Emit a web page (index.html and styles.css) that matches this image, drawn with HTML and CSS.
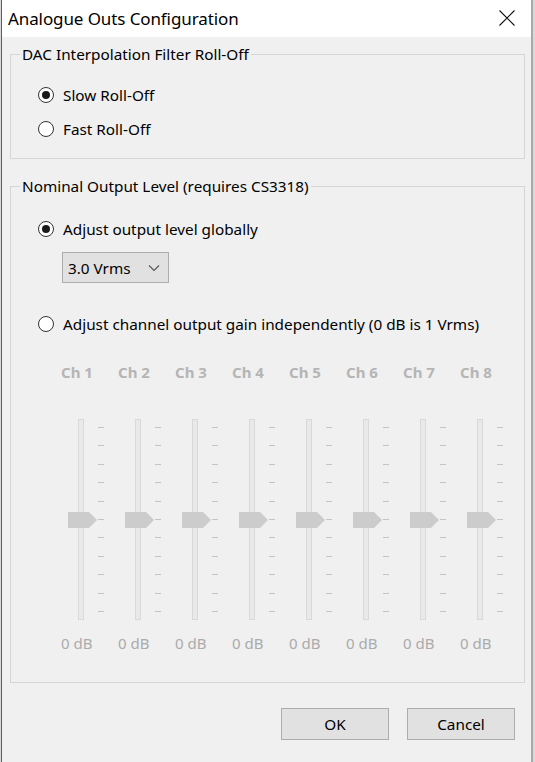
FILE: index.html
```html
<!DOCTYPE html>
<html>
<head>
<meta charset="utf-8">
<link rel="stylesheet" href="styles.css">
</head>
<body>
<div class="screen">
  <div class="window">
    <div class="titlebar">
      <span class="title">Analogue Outs Configuration</span>
      <svg class="close" width="16" height="16" viewBox="0 0 16 16"><path d="M0.5 0.5 L15.5 15.5 M15.5 0.5 L0.5 15.5" stroke="#111" stroke-width="1.1" fill="none"/></svg>
    </div>
    <div class="client">
      <fieldset class="group g1">
        <legend>DAC Interpolation Filter Roll-Off</legend>
        <div class="radio-row"><span class="radio checked"></span><span>Slow Roll-Off</span></div>
        <div class="radio-row second"><span class="radio"></span><span>Fast Roll-Off</span></div>
      </fieldset>
      <fieldset class="group g2">
        <legend>Nominal Output Level (requires CS3318)</legend>
        <div class="radio-row"><span class="radio checked"></span><span>Adjust output level globally</span></div>
        <div class="combo"><span>3.0 Vrms</span><svg width="12" height="8" viewBox="0 0 12 8"><path d="M1 1.5 L6 6.5 L11 1.5" stroke="#555" stroke-width="1.1" fill="none"/></svg></div>
        <div class="radio-row third"><span class="radio"></span><span>Adjust channel output gain independently (0 dB is 1 Vrms)</span></div>
        <div class="channels">
          <div class="ch"><div class="ch-label">Ch 1</div><div class="slider"><div class="track"></div><svg class="thumb" width="29" height="16" viewBox="0 0 29 16"><polygon points="0,0 21,0 29,8 21,16 0,16" fill="#cccccc"/></svg><div class="ticks"><i></i><i></i><i></i><i></i><i></i><i></i><i></i><i></i><i></i><i></i><i></i></div></div><div class="db">0 dB</div></div>
          <div class="ch"><div class="ch-label">Ch 2</div><div class="slider"><div class="track"></div><svg class="thumb" width="29" height="16" viewBox="0 0 29 16"><polygon points="0,0 21,0 29,8 21,16 0,16" fill="#cccccc"/></svg><div class="ticks"><i></i><i></i><i></i><i></i><i></i><i></i><i></i><i></i><i></i><i></i><i></i></div></div><div class="db">0 dB</div></div>
          <div class="ch"><div class="ch-label">Ch 3</div><div class="slider"><div class="track"></div><svg class="thumb" width="29" height="16" viewBox="0 0 29 16"><polygon points="0,0 21,0 29,8 21,16 0,16" fill="#cccccc"/></svg><div class="ticks"><i></i><i></i><i></i><i></i><i></i><i></i><i></i><i></i><i></i><i></i><i></i></div></div><div class="db">0 dB</div></div>
          <div class="ch"><div class="ch-label">Ch 4</div><div class="slider"><div class="track"></div><svg class="thumb" width="29" height="16" viewBox="0 0 29 16"><polygon points="0,0 21,0 29,8 21,16 0,16" fill="#cccccc"/></svg><div class="ticks"><i></i><i></i><i></i><i></i><i></i><i></i><i></i><i></i><i></i><i></i><i></i></div></div><div class="db">0 dB</div></div>
          <div class="ch"><div class="ch-label">Ch 5</div><div class="slider"><div class="track"></div><svg class="thumb" width="29" height="16" viewBox="0 0 29 16"><polygon points="0,0 21,0 29,8 21,16 0,16" fill="#cccccc"/></svg><div class="ticks"><i></i><i></i><i></i><i></i><i></i><i></i><i></i><i></i><i></i><i></i><i></i></div></div><div class="db">0 dB</div></div>
          <div class="ch"><div class="ch-label">Ch 6</div><div class="slider"><div class="track"></div><svg class="thumb" width="29" height="16" viewBox="0 0 29 16"><polygon points="0,0 21,0 29,8 21,16 0,16" fill="#cccccc"/></svg><div class="ticks"><i></i><i></i><i></i><i></i><i></i><i></i><i></i><i></i><i></i><i></i><i></i></div></div><div class="db">0 dB</div></div>
          <div class="ch"><div class="ch-label">Ch 7</div><div class="slider"><div class="track"></div><svg class="thumb" width="29" height="16" viewBox="0 0 29 16"><polygon points="0,0 21,0 29,8 21,16 0,16" fill="#cccccc"/></svg><div class="ticks"><i></i><i></i><i></i><i></i><i></i><i></i><i></i><i></i><i></i><i></i><i></i></div></div><div class="db">0 dB</div></div>
          <div class="ch"><div class="ch-label">Ch 8</div><div class="slider"><div class="track"></div><svg class="thumb" width="29" height="16" viewBox="0 0 29 16"><polygon points="0,0 21,0 29,8 21,16 0,16" fill="#cccccc"/></svg><div class="ticks"><i></i><i></i><i></i><i></i><i></i><i></i><i></i><i></i><i></i><i></i><i></i></div></div><div class="db">0 dB</div></div>
        </div>
      </fieldset>
      <div class="buttons">
        <div class="btn">OK</div>
        <div class="btn">Cancel</div>
      </div>
    </div>
  </div>
  <div class="edge"></div>
</div>
</body>
</html>
```
FILE: styles.css
```css
html, body {
  margin: 0;
  padding: 0;
}
body {
  background: #9c9c9c;
  font-family: "Noto Sans", "DejaVu Sans", sans-serif;
  font-size: 15.3px;
  color: #000;
}
.screen {
  display: flex;
  height: 762px;
  background: #d9d9d9;
}
.window {
  margin-left: 1px;
  width: 529px;
  border-left: 1px solid #5e5e5e;
  display: flex;
  flex-direction: column;
  background: #f0f0f0;
}
.edge {
  width: 2px;
  background: #a9a9a9;
}
.titlebar {
  height: 37px;
  background: #fff;
  display: flex;
  align-items: center;
  justify-content: space-between;
  padding: 0 16px 0 6px;
}
.title {
  font-size: 17px;
  letter-spacing: -0.1px;
}
.close {
  margin-top: -1px;
}
.client {
  flex: 1;
  display: flex;
  flex-direction: column;
}
.group {
  margin: 0 0 0 8px;
  width: 515px;
  box-sizing: border-box;
  border: 1px solid #d5d5d5;
  padding: 0 0 0 27px;
  min-width: 0;
}
.group legend {
  margin-left: -18px;
  padding: 0 2px;
  line-height: 16px;
}
.g1 {
  margin-top: 9px;
  padding-top: 21px;
  padding-bottom: 17px;
}
.g2 {
  margin-top: 19px;
  padding-top: 23px;
  padding-bottom: 31px;
}
.radio-row {
  display: flex;
  align-items: center;
  height: 24px;
}
.radio-row.second {
  margin-top: 10px;
}
.radio-row.third {
  margin-top: 29px;
}
.radio {
  width: 16px;
  height: 16px;
  box-sizing: border-box;
  border: 1px solid #333;
  border-radius: 50%;
  background: #fff;
  margin-right: 9px;
  display: flex;
  align-items: center;
  justify-content: center;
}
.radio.checked::after {
  content: "";
  width: 8px;
  height: 8px;
  border-radius: 50%;
  background: #1a1a1a;
}
.combo {
  margin: 11px 0 0 24px;
  width: 107px;
  height: 31px;
  box-sizing: border-box;
  border: 1px solid #adadad;
  background: #e1e1e1;
  display: flex;
  align-items: center;
  justify-content: space-between;
  padding: 0 8px 0 5px;
}
.channels {
  margin: 28px 0 0 23px;
  display: grid;
  grid-template-columns: repeat(8, 57px);
}
.ch {
  display: flex;
  flex-direction: column;
}
.ch-label {
  line-height: 16px;
  color: #b5b5b5;
  font-weight: 700;
  font-size: 15px;
}
.slider {
  position: relative;
  height: 201px;
  margin-top: 39px;
}
.track {
  position: absolute;
  left: 17px;
  top: 0;
  width: 6px;
  height: 201px;
  box-sizing: border-box;
  border: 1px solid #d9d9d9;
  background: #e8eaea;
}
.thumb {
  position: absolute;
  left: 7px;
  top: 93px;
}
.ticks {
  position: absolute;
  left: 37px;
  top: 8px;
  height: 185px;
  width: 6px;
  display: flex;
  flex-direction: column;
  justify-content: space-between;
}
.ticks i {
  display: block;
  height: 1px;
  background: #c4c4c4;
}
.db {
  margin-top: 15px;
  line-height: 16px;
  color: #ababab;
  font-size: 15px;
}
.buttons {
  display: flex;
  justify-content: flex-end;
  gap: 18px;
  margin-top: 25px;
  padding-right: 16px;
}
.btn {
  width: 108px;
  height: 32px;
  box-sizing: border-box;
  border: 1px solid #adadad;
  background: #e1e1e1;
  display: flex;
  align-items: center;
  justify-content: center;
}
```
